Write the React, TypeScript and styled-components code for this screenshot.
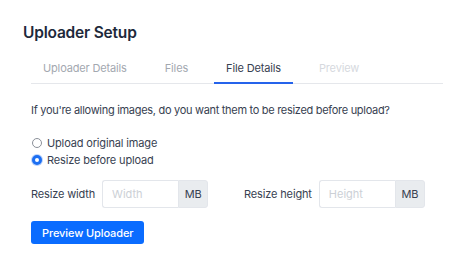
import styled, { createGlobalStyle } from "styled-components";

const GlobalStyle = createGlobalStyle`
  body {
    margin: 0;
    background: #ffffff;
    font-family: Inter, "Open Sans", sans-serif;
  }
`;

const Page = styled.div`
  width: 474px;
  height: 276px;
  padding: 23px 31px 0 23px;
  box-sizing: border-box;
`;

const Title = styled.h1`
  margin: 0 0 12px;
  font-size: 15.5px;
  font-weight: 600;
  letter-spacing: -0.2px;
  color: #1e293b;
  line-height: 20px;
`;

const Tabs = styled.div`
  display: flex;
  gap: 14px;
  margin-left: 8px;
  border-bottom: 1px solid #e5e7eb;
`;

const Tab = styled.div<{ active?: boolean; disabled?: boolean }>`
  padding: 6px 12px 7px;
  font-size: 11px;
  letter-spacing: -0.15px;
  line-height: 14px;
  color: ${({ active, disabled }) =>
    active ? "#374151" : disabled ? "#d6d9de" : "#a3a8b0"};
  border-bottom: 2px solid ${({ active }) => (active ? "#2563eb" : "transparent")};
  margin-bottom: -1px;
`;

const Body = styled.div`
  padding-left: 8px;
  color: #374151;
  font-size: 11px;
  letter-spacing: -0.15px;
`;

const Question = styled.p`
  margin: 19px 0 19px;
  line-height: 14px;
  letter-spacing: -0.3px;
`;

const RadioList = styled.div`
  display: flex;
  flex-direction: column;
  gap: 3px;
`;

const RadioRow = styled.label`
  display: flex;
  align-items: center;
  gap: 5px;
  height: 14px;
  line-height: 14px;
  margin-left: 1px;
`;

const RadioDot = styled.span<{ checked?: boolean }>`
  width: 10px;
  height: 10px;
  border-radius: 50%;
  box-sizing: border-box;
  border: ${({ checked }) => (checked ? "3px solid #1d6ff2" : "1px solid #8b9099")};
  background: #fff;
  box-shadow: ${({ checked }) => (checked ? "0 0 0 1px #bcd3fb" : "none")};
`;

const SizeRow = styled.div`
  display: flex;
  align-items: center;
  margin-top: 13px;
`;

const Field = styled.div`
  display: flex;
  align-items: center;
  gap: 7px;
  & + & {
    margin-left: 36px;
  }
`;

const InputGroup = styled.div`
  display: flex;
  height: 28px;
`;

const Input = styled.input`
  width: 76px;
  box-sizing: border-box;
  border: 1px solid #e3e6eb;
  border-right: none;
  border-radius: 3px 0 0 3px;
  padding: 0 9px;
  font-family: inherit;
  font-size: 11px;
  color: #374151;
  outline: none;
  &::placeholder {
    color: #ccd0d6;
  }
`;

const Addon = styled.span`
  width: 30px;
  display: flex;
  align-items: center;
  justify-content: center;
  background: #e9ecef;
  border: 1px solid #e3e6eb;
  border-radius: 0 3px 3px 0;
  box-sizing: border-box;
  font-size: 11px;
  color: #374151;
`;

const Button = styled.button`
  margin-top: 13px;
  height: 23px;
  padding: 0 11px;
  background: #0a6cff;
  color: #fff;
  border: none;
  border-radius: 3px;
  font-family: inherit;
  font-size: 11px;
  letter-spacing: -0.1px;
  font-weight: 500;
`;

export default function App() {
  return (
    <>
      <GlobalStyle />
      <Page>
        <Title>Uploader Setup</Title>
        <Tabs>
          <Tab>Uploader Details</Tab>
          <Tab>Files</Tab>
          <Tab active>File Details</Tab>
          <Tab disabled>Preview</Tab>
        </Tabs>
        <Body>
          <Question>If you're allowing images, do you want them to be resized before upload?</Question>
          <RadioList>
            <RadioRow>
              <RadioDot />
              Upload original image
            </RadioRow>
            <RadioRow>
              <RadioDot checked />
              Resize before upload
            </RadioRow>
          </RadioList>
          <SizeRow>
            <Field>
              Resize width
              <InputGroup>
                <Input placeholder="Width" />
                <Addon>MB</Addon>
              </InputGroup>
            </Field>
            <Field>
              Resize height
              <InputGroup>
                <Input placeholder="Height" />
                <Addon>MB</Addon>
              </InputGroup>
            </Field>
          </SizeRow>
          <Button>Preview Uploader</Button>
        </Body>
      </Page>
    </>
  );
}
